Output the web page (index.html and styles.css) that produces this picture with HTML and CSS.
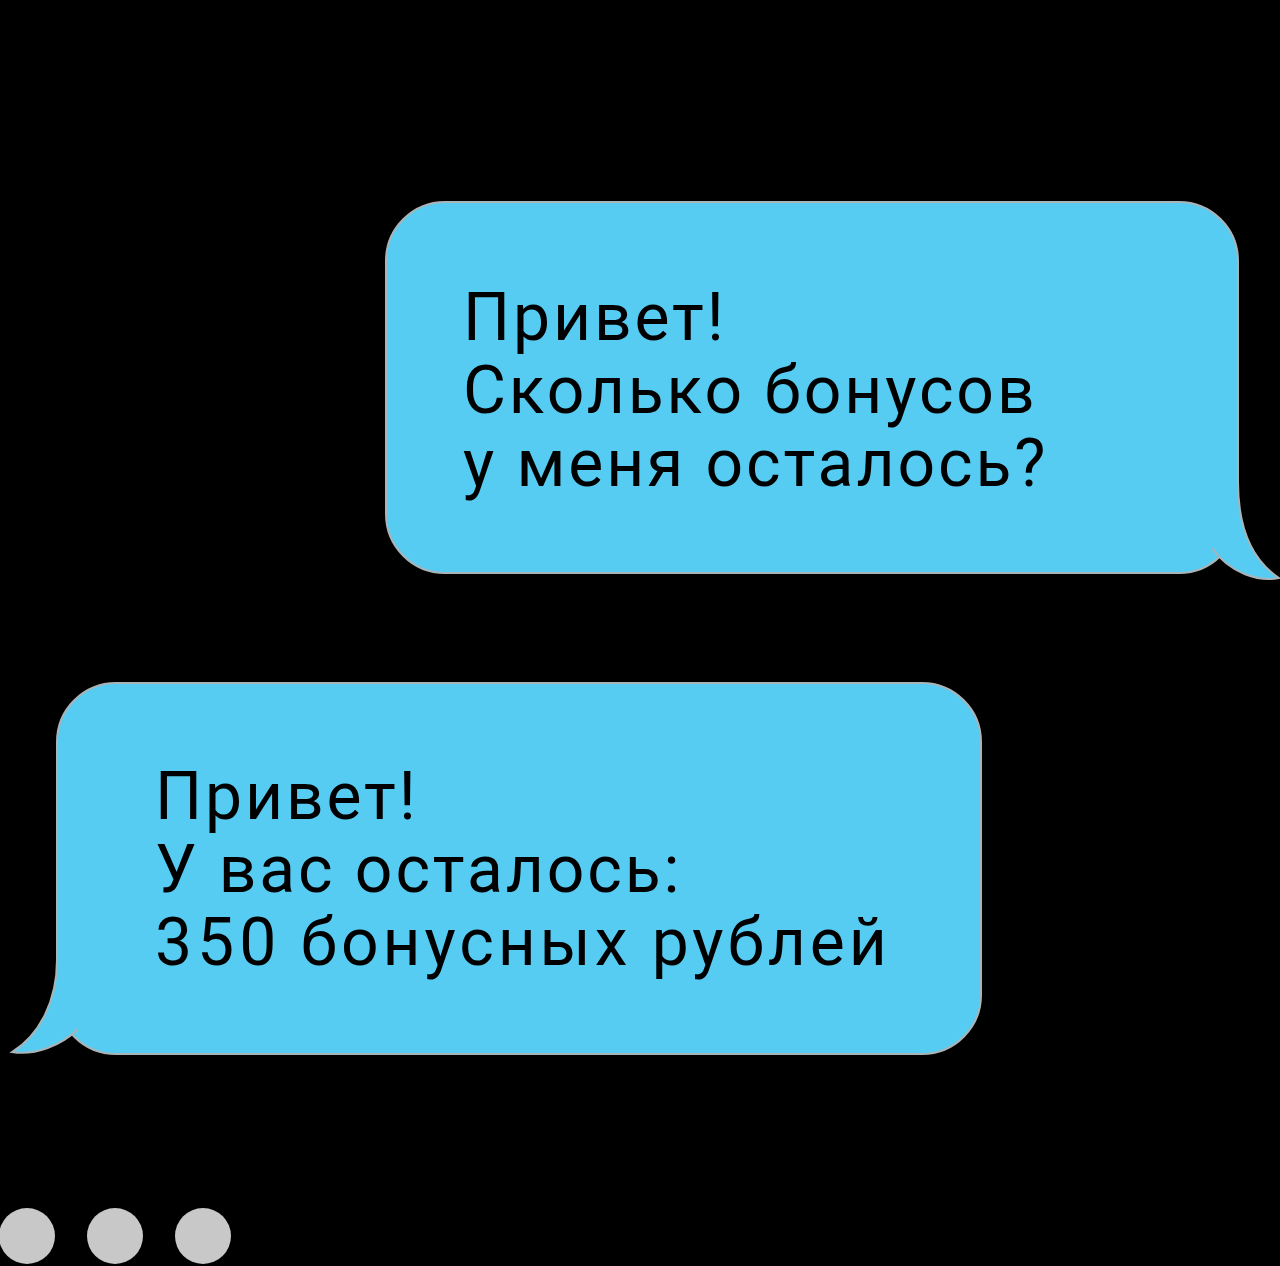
FILE: index.html
```html
<!DOCTYPE html>
<html lang="ru">
<head>
<meta charset="utf-8">
<title>Чат</title>
<link rel="stylesheet" href="styles.css">
</head>
<body>
<main class="chat">
  <div class="bubble bubble-out">
    <svg class="tail tail-right" width="80" height="100" viewBox="0 0 80 100">
      <path class="tail-fill" d="M0,0 L38,0 C38,50 55,80 79,96 C60,100 30,92 12,66 L0,66 Z"/>
      <path class="tail-edge" d="M38,0 C38,50 55,80 79,96 C60,100 30,92 12,66"/>
    </svg>
    <p class="text">Привет!<br>Сколько бонусов<br>у меня осталось?</p>
  </div>
  <div class="bubble bubble-in">
    <svg class="tail tail-left" width="80" height="100" viewBox="0 0 80 100">
      <path class="tail-fill" d="M80,0 L57,0 C57,40 40,75 12,92 C35,96 62,85 78,69 L80,69 Z"/>
      <path class="tail-edge" d="M57,0 C57,40 40,75 12,92 C35,96 62,85 78,69"/>
    </svg>
    <p class="text">Привет!<br>У вас осталось:<br><span class="num">350</span> <span class="wide">бонусных рублей</span></p>
  </div>
  <div class="typing">
    <span class="dot"></span>
    <span class="dot"></span>
    <span class="dot"></span>
  </div>
</main>
</body>
</html>
```
FILE: styles.css
```css
html, body {
  margin: 0;
  padding: 0;
  background: #000;
  overflow: hidden;
}

.chat {
  width: 1280px;
  height: 1266px;
  padding-top: 201px;
  box-sizing: border-box;
  display: flex;
  flex-direction: column;
  align-items: flex-start;
}

.bubble {
  position: relative;
  box-sizing: border-box;
  height: 373px;
  background: #57ccf2;
  border: 2px solid #a9b4b8;
  border-radius: 60px;
  font-family: Roboto, "Noto Sans", sans-serif;
  font-size: 66px;
  line-height: 73px;
  letter-spacing: 2.9px;
  color: #000;
}

.bubble-out {
  margin-left: 385px;
  width: 854px;
  padding: 78px 0 0 76px;
}

.bubble-in {
  margin-left: 56px;
  margin-top: 108px;
  width: 926px;
  padding: 76px 0 0 97px;
}

.text {
  position: relative;
  margin: 0;
  z-index: 2;
  white-space: nowrap;
}

.num {
  letter-spacing: 5px;
}

.wide {
  letter-spacing: 3.9px;
}

.tail {
  position: absolute;
  z-index: 1;
  overflow: visible;
}

.tail-right {
  left: 813px;
  top: 279px;
}

.tail-left {
  left: -58px;
  top: 276px;
}

.tail-fill {
  fill: #57ccf2;
}

.tail-edge {
  fill: none;
  stroke: #a9b4b8;
  stroke-width: 2;
}

.typing {
  margin-top: 153px;
  margin-left: -1px;
  display: flex;
  gap: 32px;
}

.dot {
  width: 56px;
  height: 56px;
  border-radius: 50%;
  background: #c8c8c8;
}
```
